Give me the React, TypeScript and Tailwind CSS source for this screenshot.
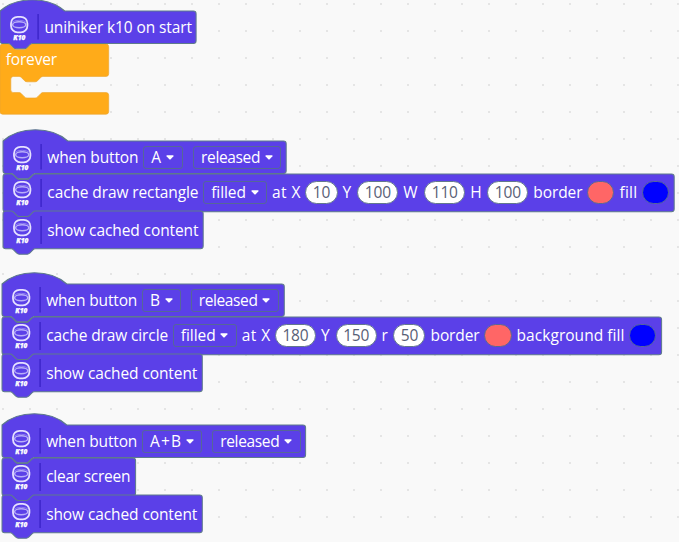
import { useLayoutEffect, useRef, useState, type ReactNode } from "react";
import { clsx } from "clsx";

// Workspace zoom: one block unit is 0.675 screen pixels.
const UNIT = 0.675;
const NOTCH = "c2,0 3,1 4,2l4,4c1,1 2,2 4,2h12c2,0 3,-1 4,-2l4,-4c1,-1 2,-2 4,-2";
const NOTCH_BACK = "c-2,0 -3,1 -4,2l-4,4c-1,1 -2,2 -4,2h-12c-2,0 -3,-1 -4,-2l-4,-4c-1,-1 -2,-2 -4,-2";

// Spaces the letters so that a label fills the width its class gives it.
function Label({ children, className }: { children: string; className: string }) {
  const box = useRef<HTMLSpanElement>(null);
  const ink = useRef<HTMLSpanElement>(null);
  const [letterSpacing, setLetterSpacing] = useState(0);
  useLayoutEffect(() => {
    if (!box.current || !ink.current || children.length < 2) return;
    const free = box.current.getBoundingClientRect().width + 1.2 - ink.current.getBoundingClientRect().width;
    setLetterSpacing(free / (children.length - 1));
  }, [children]);
  return (
    <span ref={box} className={clsx("block shrink-0", className)}>
      <span ref={ink} className="-ml-[0.4px] inline-block whitespace-pre" style={{ letterSpacing }}>{children}</span>
    </span>
  );
}

function Menu({ children, className }: { children: string; className: string }) {
  return (
    <div className="flex h-[22.4px] shrink-0 items-center gap-[5.4px] rounded-[3px] border border-[#566798] pr-[7.4px] pl-[7.4px]">
      <Label className={className}>{children}</Label>
      <svg className="mt-px h-[5px] w-2 shrink-0" viewBox="0 0 8 5">
        <path d="M1 .3h6q.9.2.4 1L4.7 4.2q-.7.7-1.4 0L.6 1.3Q.1.5 1 .3Z" fill="#fff" />
      </svg>
    </div>
  );
}

function NumberField({ children }: { children: string }) {
  return (
    <div className="flex h-[22.4px] shrink-0 items-center rounded-full border border-[#63788d] bg-white px-[7px] font-normal text-[#575e75]">
      <Label className={children.length > 2 ? "w-[25px]" : "w-[16.4px]"}>{children}</Label>
    </div>
  );
}

function Swatch({ className }: { className: string }) {
  return <div className={clsx("h-[22.4px] w-[27.2px] shrink-0 rounded-full border border-[#566798]", className)} />;
}

function Badge() {
  return (
    <svg className="h-[27px] w-[27px] shrink-0" viewBox="0 0 27 27" fill="none" stroke="#e6e1ff">
      <rect x="5" y="2.8" width="16.4" height="15.6" rx="6.6" strokeWidth="1.8" />
      <ellipse cx="13.2" cy="10.8" rx="6.6" ry="3" strokeWidth="1.5" stroke="#b9aff8" />
      <path d="M6 8.3q2.4-2 7.2-2t7.2 2" stroke="#8d7cf0" strokeWidth="1" />
      <text x="13.3" y="25.6" textAnchor="middle" stroke="#fff" strokeWidth=".25" fill="#fff" fontSize="6.8" fontWeight="800" fontStyle="italic" fontFamily="Open Sans, sans-serif" textLength="12" lengthAdjust="spacingAndGlyphs">K10</text>
    </svg>
  );
}

function Block({ width, hat = false, children }: { width: number; hat?: boolean; children: ReactNode }) {
  const w = width / UNIT;
  const h = hat ? 48 : 56;
  const start = hat ? "M0,0c25,-22 71,-22 96,0" : `M0,4a4,4 0 0 1 4,-4h8${NOTCH}`;
  const d = `${start}H${w - 4}a4,4 0 0 1 4,4v${h - 8}a4,4 0 0 1 -4,4H48${NOTCH_BACK}H4a4,4 0 0 1 -4,-4z`;
  return (
    <div className={clsx("relative flex items-center", hat ? "h-[32.4px]" : "h-[37.8px]")}>
      <svg className="absolute inset-0 h-full w-full overflow-visible">
        <path d={d} transform={`scale(${UNIT})`} fill="#5b40e8" stroke="#5f7b8b" strokeWidth="1.5" />
        <path d={hat ? "M38.1 3v25.5" : "M38.1 5v28"} stroke="#3b24c8" strokeWidth="1.4" />
      </svg>
      <div className="relative flex items-center gap-[5.46px] pl-[5.9px]">
        <div className="w-[33.2px]"><Badge /></div>
        {children}
      </div>
    </div>
  );
}

function ForeverBlock() {
  const d = `M0,4a4,4 0 0 1 4,-4h8${NOTCH}H157a4,4 0 0 1 4,4v40a4,4 0 0 1 -4,4H64${NOTCH_BACK}h-8a4,4 0 0 0 -4,4v16a4,4 0 0 0 4,4h8${NOTCH}H157a4,4 0 0 1 4,4v24a4,4 0 0 1 -4,4H4a4,4 0 0 1 -4,-4z`;
  return (
    <div className="relative h-[70px] w-[109px]">
      <svg className="absolute inset-0 h-full w-full overflow-visible">
        <path d={d} transform={`scale(${UNIT})`} fill="#ffab19" stroke="#eba52f" strokeWidth="1" />
      </svg>
      <div className="relative flex h-[31px] items-center pl-[5.8px]"><Label className="w-[50.2px]">forever</Label></div>
    </div>
  );
}

export default function App() {
  return (
    <main className="relative h-[542px] w-[679px] overflow-hidden bg-[#f9f9f9] font-['Open_Sans','Noto_Sans',sans-serif] text-[15.5px] leading-[22px] font-medium text-white">
      <svg className="absolute inset-0 h-full w-full">
        <pattern id="grid" width="27" height="27" patternUnits="userSpaceOnUse">
          <rect x="2" y="3" width="2" height="2" fill="#e5e5e5" />
        </pattern>
        <rect width="679" height="542" fill="url(#grid)" />
      </svg>

      <section className="absolute top-[11.2px] left-[0.3px] flex flex-col">
        <div className="z-10">
          <Block hat width={196.1}>
            <Label className="w-[146.4px]">unihiker k10 on start</Label>
          </Block>
        </div>
        <ForeverBlock />
      </section>

      <section className="absolute top-[141.2px] left-[3.2px] flex flex-col">
        <Block hat width={283.2}>
          <Label className="w-[90px]">when button</Label>
          <Menu className="w-[9.4px]">A</Menu>
          <span className="-ml-[0.6px]" />
          <Menu className="w-[58.2px]">released</Menu>
        </Block>
        <Block width={671.2}>
          <Label className="w-[150px]">cache draw rectangle</Label>
          <Menu className="w-[33.6px]">filled</Menu>
          <Label className="w-[27.3px]">at X</Label>
          <NumberField>10</NumberField>
          <Label className="w-[8.8px]">Y</Label>
          <NumberField>100</NumberField>
          <Label className="w-[15px]">W</Label>
          <NumberField>110</NumberField>
          <Label className="w-[11.2px]">H</Label>
          <NumberField>100</NumberField>
          <Label className="w-[48px]">border</Label>
          <Swatch className="bg-[#ff6666]" />
          <Label className="w-[16.6px]">fill</Label>
          <Swatch className="bg-[#0000ff]" />
        </Block>
        <Block width={200.2}>
          <Label className="w-[150px]">show cached content</Label>
        </Block>
      </section>

      <section className="absolute top-[284.2px] left-[2px] flex flex-col">
        <Block hat width={282.3}>
          <Label className="w-[90px]">when button</Label>
          <Menu className="w-[8.8px]">B</Menu>
          <span className="-ml-[1.2px]" />
          <Menu className="w-[58px]">released</Menu>
        </Block>
        <Block width={659.6}>
          <Label className="w-[120.8px]">cache draw circle</Label>
          <Menu className="w-[33.8px]">filled</Menu>
          <Label className="w-[27.2px]">at X</Label>
          <NumberField>180</NumberField>
          <Label className="w-[8.8px]">Y</Label>
          <NumberField>150</NumberField>
          <Label className="w-[5.6px]">r</Label>
          <NumberField>50</NumberField>
          <Label className="w-[48px]">border</Label>
          <Swatch className="bg-[#ff6666]" />
          <Label className="w-[106.6px]">background fill</Label>
          <Swatch className="bg-[#0000ff]" />
        </Block>
        <Block width={200.3}>
          <Label className="w-[150px]">show cached content</Label>
        </Block>
      </section>

      <section className="absolute top-[425.2px] left-[2px] flex flex-col">
        <Block hat width={303.6}>
          <Label className="w-[90px]">when button</Label>
          <Menu className="w-[29.8px]">A+B</Menu>
          <span className="-ml-[0.6px]" />
          <Menu className="w-[58.2px]">released</Menu>
        </Block>
        <Block width={133.6}>
          <Label className="w-[83.2px]">clear screen</Label>
        </Block>
        <Block width={200.3}>
          <Label className="w-[150px]">show cached content</Label>
        </Block>
      </section>
    </main>
  );
}
